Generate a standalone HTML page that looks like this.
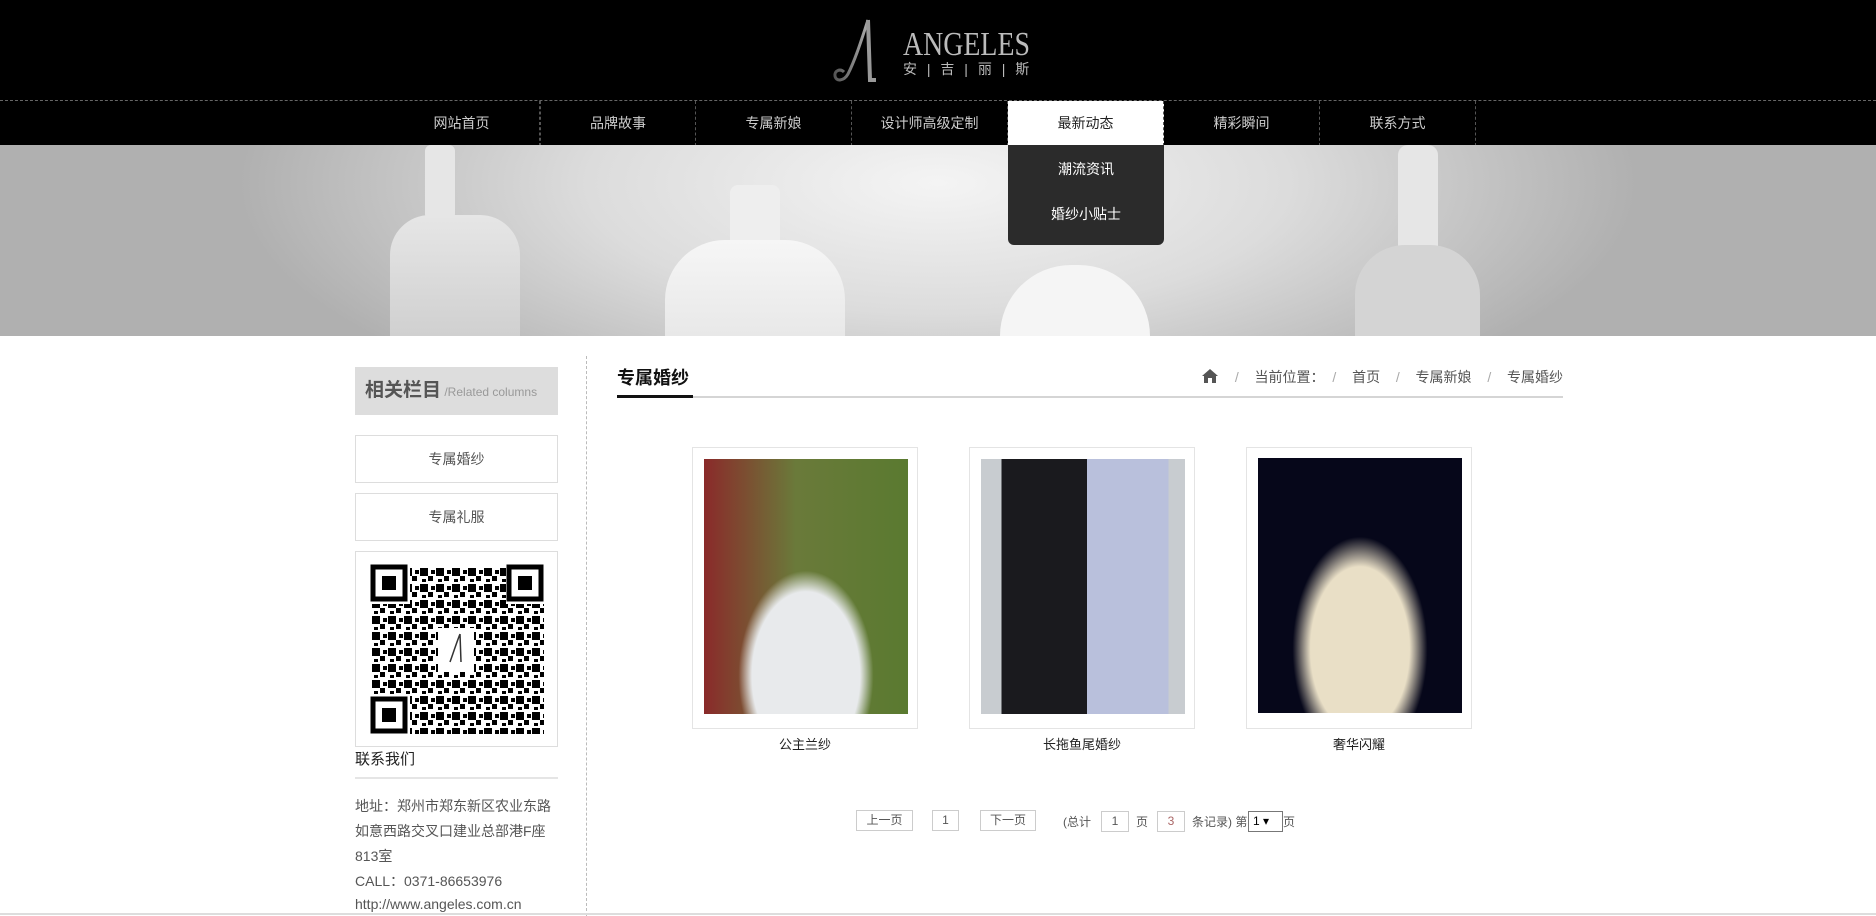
<!DOCTYPE html>
<html><head><meta charset="utf-8"><style>
*{margin:0;padding:0;box-sizing:border-box}
body{width:1876px;height:916px;overflow:hidden;background:#fff;font-family:"Liberation Sans","Noto Sans CJK SC",sans-serif;color:#333;position:relative}
.abs{position:absolute}
#hdr{left:0;top:0;width:1876px;height:100px;background:#000}
#nav{left:0;top:100px;width:1876px;height:45px;background:#000;border-top:1px dashed #666}
.ni{position:absolute;top:0;height:45px;width:156px;text-align:center;line-height:44px;font-size:14px;color:#ccc;border-right:1px dashed #555}
#banner{left:0;top:145px;width:1876px;height:191px;background:radial-gradient(ellipse 700px 260px at 50% 20%,#f4f4f4 0%,#dcdcdc 50%,#b0b0b0 100%)}
.dress{position:absolute;background:linear-gradient(#f4f4f4,#ddd);}
#dd{left:1008px;top:145px;width:156px;height:100px;background:#2b2b2b;border-radius:0 0 6px 6px;color:#fff;font-size:14px;text-align:center}
.side{left:355px;width:203px;border:1px solid #ddd;text-align:center;font-size:14px;color:#555}
.card{position:absolute;top:447px;width:226px;height:282px;border:1px solid #e4e4e4;background:#fff}
.card .im{position:absolute;left:11px;top:11px;width:204px;height:255px}
.cap{position:absolute;top:734px;width:226px;text-align:center;font-size:13px;color:#222}
.pg{position:absolute;top:810px;height:21px;border:1px solid #ccc;font-size:12px;line-height:19px;text-align:center;color:#555}
.ad{left:355px;font-size:14px;color:#555}
</style></head><body>
<div id="hdr" class="abs">
  <svg class="abs" style="left:832px;top:18px" width="60" height="64" viewBox="0 0 60 64"><defs><linearGradient id="lg" x1="0" x2="1"><stop offset="0" stop-color="#555"/><stop offset="1" stop-color="#aaa"/></linearGradient></defs>
  <path d="M36 2 C30 20 24 40 16 56 C12 63 4 64 3 58 C2 53 8 50 12 54" fill="none" stroke="url(#lg)" stroke-width="3"/>
  <path d="M36 2 L38 62 L44 62" fill="none" stroke="#999" stroke-width="4"/></svg>
  <div class="abs" style="left:903px;top:28px;font-family:'Liberation Serif',serif;font-size:34px;color:#bbb;transform:scaleX(.82);transform-origin:left;line-height:34px">ANGELES</div>
  <div class="abs" style="left:903px;top:61px;font-size:14px;color:#bbb;letter-spacing:3px;line-height:16px">安 | 吉 | 丽 | 斯</div>
</div>
<div id="nav" class="abs">
  <div class="ni" style="left:384px">网站首页</div>
  <div class="ni" style="left:540px;border-left:1px dashed #555">品牌故事</div>
  <div class="ni" style="left:696px">专属新娘</div>
  <div class="ni" style="left:852px">设计师高级定制</div>
  <div class="ni" style="left:1008px;background:#fff;color:#222">最新动态</div>
  <div class="ni" style="left:1164px">精彩瞬间</div>
  <div class="ni" style="left:1320px">联系方式</div>
</div>
<div id="banner" class="abs">
  <div class="dress" style="left:425px;top:0;width:30px;height:75px;border-radius:6px;background:#e6e6e6"></div>
  <div class="dress" style="left:390px;top:70px;width:130px;height:121px;border-radius:40px 40px 0 0;background:linear-gradient(#e6e6e6,#d0d0d0)"></div>
  <div class="dress" style="left:730px;top:40px;width:50px;height:70px;border-radius:8px;background:#eee"></div>
  <div class="dress" style="left:665px;top:95px;width:180px;height:96px;border-radius:60px 60px 0 0;background:linear-gradient(#f6f6f6,#e8e8e8)"></div>
  <div class="dress" style="left:1000px;top:120px;width:150px;height:71px;border-radius:75px 75px 0 0;background:#f5f5f5"></div>
  <div class="dress" style="left:1398px;top:0;width:40px;height:120px;border-radius:10px;background:#e6e6e6"></div>
  <div class="dress" style="left:1355px;top:100px;width:125px;height:91px;border-radius:50px 50px 0 0;background:#d4d4d4"></div>
</div>
<div id="dd" class="abs">
  <div style="position:absolute;top:14px;width:100%">潮流资讯</div>
  <div style="position:absolute;top:59px;width:100%">婚纱小贴士</div>
</div>

<div class="abs side" style="top:367px;height:48px;background:#ddd;border:none;text-align:left;padding-left:10px;line-height:48px"><span style="font-size:19px;color:#555;font-weight:bold">相关栏目</span><span style="font-size:12px;color:#999"> /Related columns</span></div>
<div class="abs side" style="top:435px;height:48px;line-height:46px">专属婚纱</div>
<div class="abs side" style="top:493px;height:48px;line-height:46px">专属礼服</div>
<div class="abs side" style="top:551px;height:196px">
<svg width="201" height="194" viewBox="0 0 201 194">
<defs><pattern id="q" width="16" height="16" patternUnits="userSpaceOnUse"><rect width="8" height="8" fill="#000"/><rect x="8" y="8" width="5" height="5" fill="#000"/><rect x="11" y="2" width="4" height="4" fill="#000"/><rect x="2" y="11" width="4" height="3" fill="#000"/></pattern></defs>
<rect x="16" y="14" width="172" height="168" fill="url(#q)"/>
<g fill="#fff"><rect x="14" y="12" width="40" height="40"/><rect x="150" y="12" width="40" height="40"/><rect x="14" y="144" width="40" height="40"/><rect x="82" y="76" width="36" height="44"/></g>
<g fill="none" stroke="#000" stroke-width="5"><rect x="17" y="15" width="32" height="32"/><rect x="153" y="15" width="32" height="32"/><rect x="17" y="147" width="32" height="32"/></g>
<g fill="#000"><rect x="26" y="24" width="14" height="14"/><rect x="162" y="24" width="14" height="14"/><rect x="26" y="156" width="14" height="14"/></g>
<path d="M104 82 C100 92 97 102 94 110 M104 82 L105 110" stroke="#333" stroke-width="1.5" fill="none"/>
</svg></div>
<div class="abs" style="left:355px;top:748px;font-size:15px;color:#222">联系我们</div>
<div class="abs" style="left:355px;top:777px;width:203px;border-top:2px solid #e5e5e5"></div>
<div class="abs ad" style="top:796px">地址：郑州市郑东新区农业东路</div>
<div class="abs ad" style="top:821px">如意西路交叉口建业总部港F座</div>
<div class="abs ad" style="top:846px">813室</div>
<div class="abs ad" style="top:871px">CALL：0371-86653976</div>
<div class="abs ad" style="top:896px">http://www.angeles.com.cn</div>
<div class="abs" style="left:586px;top:356px;height:560px;border-left:1px dashed #bbb"></div>

<div class="abs" style="left:617px;top:364px;font-size:18px;font-weight:bold;color:#111">专属婚纱</div>
<div class="abs" style="left:617px;top:396px;width:946px;border-top:2px solid #d5d5d5"></div>
<div class="abs" style="left:617px;top:395px;width:76px;border-top:3px solid #111"></div>
<div class="abs" style="right:313px;top:367px;font-size:14px;color:#555;white-space:nowrap;word-spacing:4px">
<svg width="18" height="16" viewBox="0 0 18 16" style="vertical-align:-2px"><path d="M9 1L1 8h2v7h4v-5h4v5h4V8h2z" fill="#555"/></svg>
&nbsp;<span style="color:#aaa">/</span>&nbsp; 当前位置：&nbsp;<span style="color:#aaa">/</span>&nbsp; 首页 &nbsp;<span style="color:#aaa">/</span>&nbsp; 专属新娘 &nbsp;<span style="color:#aaa">/</span>&nbsp; 专属婚纱</div>

<div class="card" style="left:692px"><div class="im" style="background:radial-gradient(ellipse 90px 140px at 50% 85%,#e8eaec 0 60%,transparent 75%),linear-gradient(90deg,#8a2a2a,#6a7a3a 45%,#5a7a30)"></div></div>
<div class="card" style="left:969px"><div class="im" style="background:linear-gradient(90deg,#c8ccd0 0 10%,#1a1a1e 10% 52%,#b9c0dc 52% 92%,#c8ccd0 92%)"></div></div>
<div class="card" style="left:1246px"><div class="im" style="top:10px;background:radial-gradient(ellipse 90px 150px at 50% 75%,#e9dfc6 0 55%,transparent 75%),#06071a"></div></div>
<div class="cap" style="left:692px">公主兰纱</div>
<div class="cap" style="left:969px">长拖鱼尾婚纱</div>
<div class="cap" style="left:1246px">奢华闪耀</div>

<div class="pg" style="left:856px;width:57px">上一页</div>
<div class="pg" style="left:932px;width:27px">1</div>
<div class="pg" style="left:980px;width:56px">下一页</div>
<div class="abs" style="left:1063px;top:813px;font-size:12px;color:#555">(总计</div>
<div class="pg" style="left:1101px;top:811px;width:28px">1</div>
<div class="abs" style="left:1136px;top:813px;font-size:12px;color:#555">页</div>
<div class="pg" style="left:1157px;top:811px;width:28px;color:#a66">3</div>
<div class="abs" style="left:1192px;top:813px;font-size:12px;color:#555">条记录) 第</div>
<div class="pg" style="left:1248px;top:811px;width:35px;border-color:#777;color:#000;text-align:left;padding-left:4px">1 ▾</div>
<div class="abs" style="left:1283px;top:813px;font-size:12px;color:#555">页</div>
<div class="abs" style="left:0;top:913px;width:1876px;border-top:2px solid #ddd"></div>
</body></html>
